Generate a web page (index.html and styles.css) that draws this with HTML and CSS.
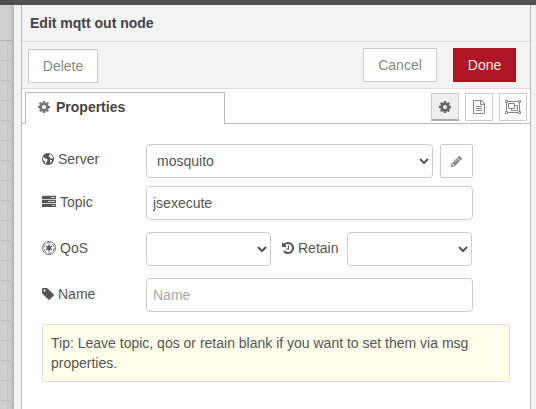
FILE: index.html
```html
<!DOCTYPE html>
<html lang="en">
<head>
<meta charset="utf-8">
<title>Edit mqtt out node</title>
<link rel="stylesheet" href="styles.css">
</head>
<body>
<svg class="defs" width="0" height="0">
  <symbol id="cog" viewBox="0 0 1792 1792"><path d="M1152 896q0-106-75-181t-181-75-181 75-75 181 75 181 181 75 181-75 75-181zm512-109v222q0 12-8 23t-20 13l-185 28q-19 54-39 91 35 50 107 138 10 12 10 25t-9 23q-27 37-99 108t-94 71q-12 0-26-9l-138-108q-44 23-91 38-16 136-29 186-7 28-36 28h-222q-14 0-24.500-8.500t-11.500-21.500l-28-184q-49-16-90-37l-141 107q-10 9-25 9-14 0-25-11-126-114-165-168-7-10-7-23 0-12 8-23 15-21 51-66.500t54-70.500q-27-50-41-99l-183-27q-13-2-21-12.500t-8-23.500v-222q0-12 8-23t19-13l186-28q14-46 39-92-40-57-107-138-10-12-10-24 0-10 9-23 26-36 98.500-107.500t94.500-71.500q13 0 26 10l138 107q44-23 91-38 16-136 29-186 7-28 36-28h222q14 0 24.500 8.500t11.500 21.500l28 184q49 16 90 37l142-107q9-9 24-9 13 0 25 10 129 119 165 170 7 8 7 22 0 12-8 23-15 21-51 66.500t-54 70.500q26 50 41 98l183 28q13 2 21 12.500t8 23.500z"/></symbol>
</svg>
<div class="header-bar"></div>
<div class="editor">
  <div class="workspace"><div class="grid"></div></div>
  <div class="resize-handle"></div>
  <main class="tray">
    <h1 class="tray-title">Edit mqtt out node</h1>
    <div class="toolbar">
      <button class="btn btn-delete">Delete</button>
      <button class="btn btn-cancel">Cancel</button>
      <button class="btn btn-primary">Done</button>
    </div>
    <div class="tabs">
      <div class="tab"><svg class="icon"><use href="#cog"/></svg>Properties</div>
      <div class="tab-actions">
        <button class="tab-btn active"><svg class="icon"><use href="#cog"/></svg></button>
        <button class="tab-btn"><svg class="icon" viewBox="0 0 14 14"><path fill-rule="evenodd" d="M1.750 0H9q.4 0 .8.350L12.650 3.200q.350.4.350.9v9.150q0 .750-.750.750H1.750Q1 14 1 13.250V.750Q1 0 1.750 0zM2 1v12h10V5H8.750Q8 5 8 4.250V1zM9 1.100V4h2.900zM4 6h6v1H4zM4 8h6v1H4zM4 10h6v1H4z"/></svg></button>
        <button class="tab-btn"><svg class="icon icon-group" viewBox="0 0 16 14"><path fill="none" stroke="currentColor" d="M3 1.500h10M3 12.500h10M1.500 3v8M14.500 3v8M.5.5h2v2h-2zM13.500.5h2v2h-2zM.5 11.500h2v2h-2zM13.500 11.500h2v2h-2zM3.500 3.500h6v5h-6zM9.500 5.500h3v5h-6v-2"/></svg></button>
      </div>
    </div>
    <form class="form">
      <div class="row row-server">
        <label><svg class="icon globe" viewBox="0 0 12 12"><circle cx="6" cy="6" r="6"/><path fill="#fff" d="M7.200 1.300L9 1.700l1.400 1.400.7 1.700-.7 1-1-.5-.8.5-.9-.9.9-.7-.7-.5-1 .3-.4-.8.8-.7zM1.300 3.600l1 .8.7 1.100 1.500.3 1.200 1-.4 1.300-.9.8-.2 1.900-1-.6-.6-1.900-.9-1L1.100 6zM8 7.300l1.200-.5.8.7-.6 1.500-1.300.9z"/></svg>Server</label>
        <select class="field grow"><option>mosquito</option></select>
        <button type="button" class="btn btn-edit"><svg class="icon" viewBox="0 0 1792 1792"><path d="M491 1536l91-91-235-235-91 91v107h128v128h107zm523-928q0-22-22-22-10 0-17 7l-542 542q-7 7-7 17 0 22 22 22 10 0 17-7l542-542q7-7 7-17zm-54-192l416 416-832 832h-416v-416zm683 96q0 53-37 90l-166 166-416-416 166-165q36-38 90-38 53 0 91 38l235 234q37 39 37 91z"/></svg></button>
      </div>
      <div class="row row-topic">
        <label><svg class="icon wide" viewBox="0 0 14 14"><path fill-rule="evenodd" d="M.4.700h13.200q.4 0 .4.400v2.500q0 .4-.4.400H.4Q0 4 0 3.600V1.100Q0 .7.4.7zM9 2v.8h4V2zM.4 4.700h13.200q.4 0 .4.400v2.500q0 .4-.4.400H.4Q0 8 0 7.600V5.100q0-.4.4-.4zM6 6v.8h7V6zM.4 8.700h13.200q.4 0 .4.400v2.500q0 .4-.4.400H.4Q0 12 0 11.600V9.100q0-.4.4-.4zM10 10v.8h3V10z"/></svg>Topic</label>
        <input class="field grow" type="text" value="jsexecute">
      </div>
      <div class="row row-qos">
        <label><svg class="icon wide" viewBox="0 0 14 14"><g fill="none" stroke="currentColor"><circle cx="7" cy="7" r="6.500" stroke-width=".8"/><circle cx="7" cy="7" r="5.200" stroke-width=".8" stroke-dasharray="3.600 1.845"/><path stroke-width="1.300" d="M7 3.400v7.200M3.900 5.200l6.200 3.600M10.100 5.200L3.900 8.800"/></g><circle cx="7" cy="7" r="2"/></svg>QoS</label>
        <select class="field half"><option></option></select>
        <span class="retain"><svg class="icon" viewBox="128 0 1664 1792"><path d="M1664 896q0 156-61 298t-164 245-245 164-298 61q-172 0-327-72.500t-264-204.500q-7-10-6.500-22.500t8.500-20.500l137-138q10-9 25-9 16 2 23 12 73 95 179 147t225 52q104 0 198.500-40.500t163.500-109.500 109.500-163.500 40.500-198.500-40.500-198.500-109.500-163.500-163.500-109.500-198.500-40.500q-98 0-188 35.500t-160 101.500l137 138q31 30 14 69-17 40-59 40h-448q-26 0-45-19t-19-45v-448q0-42 40-59 39-17 69 14l130 129q107-101 244.500-156.500t284.500-55.500q156 0 298 61t245 164 164 245 61 298zm-640-288v448q0 14-9 23t-23 9h-320q-14 0-23-9t-9-23v-64q0-14 9-23t23-9h224v-352q0-14 9-23t23-9h64q14 0 23 9t9 23z"/></svg>Retain</span>
        <select class="field half"><option></option></select>
      </div>
      <div class="row row-name">
        <label><svg class="icon tag" viewBox="128 128 1536 1536"><path d="M576 448q0-53-37.500-90.500t-90.500-37.500-90.500 37.500-37.500 90.500 37.500 90.500 90.500 37.500 90.500-37.500 37.500-90.500zm1067 576q0 53-37 90l-491 492q-39 37-91 37-53 0-90-37l-715-716q-38-37-64.500-101t-26.500-117v-416q0-52 38-90t90-38h416q53 0 117 26.500t102 64.500l715 714q37 39 37 91z"/></svg>Name</label>
        <input class="field grow" type="text" placeholder="Name">
      </div>
      <div class="tips">Tip: Leave topic, qos or retain blank if you want to set them via msg properties.</div>
    </form>
  </main>
  <div class="sidebar-edge"></div>
</div>
</body>
</html>
```
FILE: styles.css
```css
* { box-sizing: border-box; }
body {
  margin: 0;
  height: 409px;
  overflow: hidden;
  display: flex;
  flex-direction: column;
  background: #fff;
  color: #555;
  font: 14px/20px "Liberation Sans", Arial, sans-serif;
}
.defs { display: block; position: absolute; }
.header-bar { height: 5px; flex: none; background: #4f4f4f; }
.editor { flex: 1; display: flex; }
.workspace {
  width: 14px;
  padding-top: 35px;
  background: linear-gradient(90deg, transparent 9px, rgba(0,0,0,.12)), #cfcfcf;
}
.grid {
  height: 100%;
  border-top: 1px solid #b2b2b2;
  background:
    linear-gradient(90deg, transparent 7px, #c3c3c3 7px, #c3c3c3 8px, transparent 8px),
    repeating-linear-gradient(transparent 0 19px, #c3c3c3 19px 20px);
}
.resize-handle { width: 7px; background: #f3f3f3; }
.tray {
  width: 510px;
  border-left: 1px solid #bbb;
  border-right: 1px solid #bbb;
  background: #fff;
}
.sidebar-edge { flex: 1; background: #f3f3f3; }
.tray-title {
  margin: 0;
  height: 37px;
  padding: 8px 8px;
  background: #f3f3f3;
  border-bottom: 1px solid #ddd;
  color: #444;
  font-size: 14px;
  line-height: 20px;
}
.toolbar {
  display: flex;
  align-items: flex-start;
  height: 47px;
  padding: 6px 14px 0 6px;
  background: #f3f3f3;
  border-bottom: 1px solid #ddd;
}
.btn {
  height: 34px;
  padding: 0;
  border: 1px solid #ccc;
  border-radius: 0;
  background: #fff;
  color: #888;
  font: inherit;
}
.btn-delete { width: 70px; margin-top: 1px; }
.btn-cancel { width: 74px; margin: 0 16px 0 auto; }
.btn-primary { width: 63px; background: #ad1625; border-color: #ad1625; color: #eee; }
.icon { width: 14px; height: 14px; flex: none; fill: currentColor; }
.tabs {
  display: flex;
  align-items: flex-end;
  height: 35px;
  background: linear-gradient(#bbb, #bbb) bottom / 100% 1px no-repeat;
}
.tab {
  display: flex;
  align-items: center;
  width: 200px;
  height: 32px;
  margin-left: 3px;
  padding: 0 0 3px 11px;
  border: 1px solid #bbb;
  border-bottom: 0;
  background: #fff;
  color: #444;
  font-weight: bold;
}
.tab .icon { margin-right: 5px; color: #777; }
.tab-actions { display: flex; gap: 6px; margin: 0 3px 3px auto; }
.tab-btn {
  display: flex;
  align-items: center;
  justify-content: center;
  width: 28px;
  height: 28px;
  padding: 0;
  border: 1px solid #ccc;
  background: #fff;
  color: #888;
}
.tab-btn.active { padding-top: 1px; background: #efefef; color: #666; border-bottom: 2px solid #aaa; }
.icon-group { width: 16px; }
.form { padding: 20px 20px 0; }
.row { display: flex; width: 431px; height: 34px; }
.row label { display: flex; align-items: flex-start; width: 104px; flex: none; }
.row label .icon { width: 12px; height: 12px; margin: 4px 4px 0 0; }
.row label .wide { width: 14px; height: 14px; margin-top: 3px; }
.row-server { margin-bottom: 8px; }
.row-server label { padding-top: 5px; }
.row-topic { margin-bottom: 12px; }
.row-topic label { padding-top: 6px; }
.row-qos { margin-bottom: 12px; }
.row-qos label { padding-top: 6px; }
.row-name { margin-bottom: 12px; }
.row-name label { padding-top: 6px; }
.field {
  height: 34px;
  margin: 0;
  border: 1px solid #ccc;
  border-radius: 4px;
  background: #fff;
  color: #555;
  font: inherit;
  padding: 4px 6px;
}
select.field { padding-right: 7px; }
.field::placeholder { color: #aaa; opacity: 1; }
.grow { flex: 1; min-width: 0; }
.half { width: 125px; }
.btn-edit {
  display: flex;
  align-items: center;
  justify-content: center;
  width: 33px;
  margin-left: 7px;
  border-radius: 2px;
}
.btn-edit .icon { width: 13px; height: 13px; }
.retain { display: flex; width: 76px; padding: 6px 0 0 11px; }
.retain .icon { width: 13px; margin: 3px 3px 0 0; }
.tips {
  height: 58px;
  padding: 8px;
  border: 1px solid #ddd;
  border-radius: 2px;
  background: #ffffec;
}
```
